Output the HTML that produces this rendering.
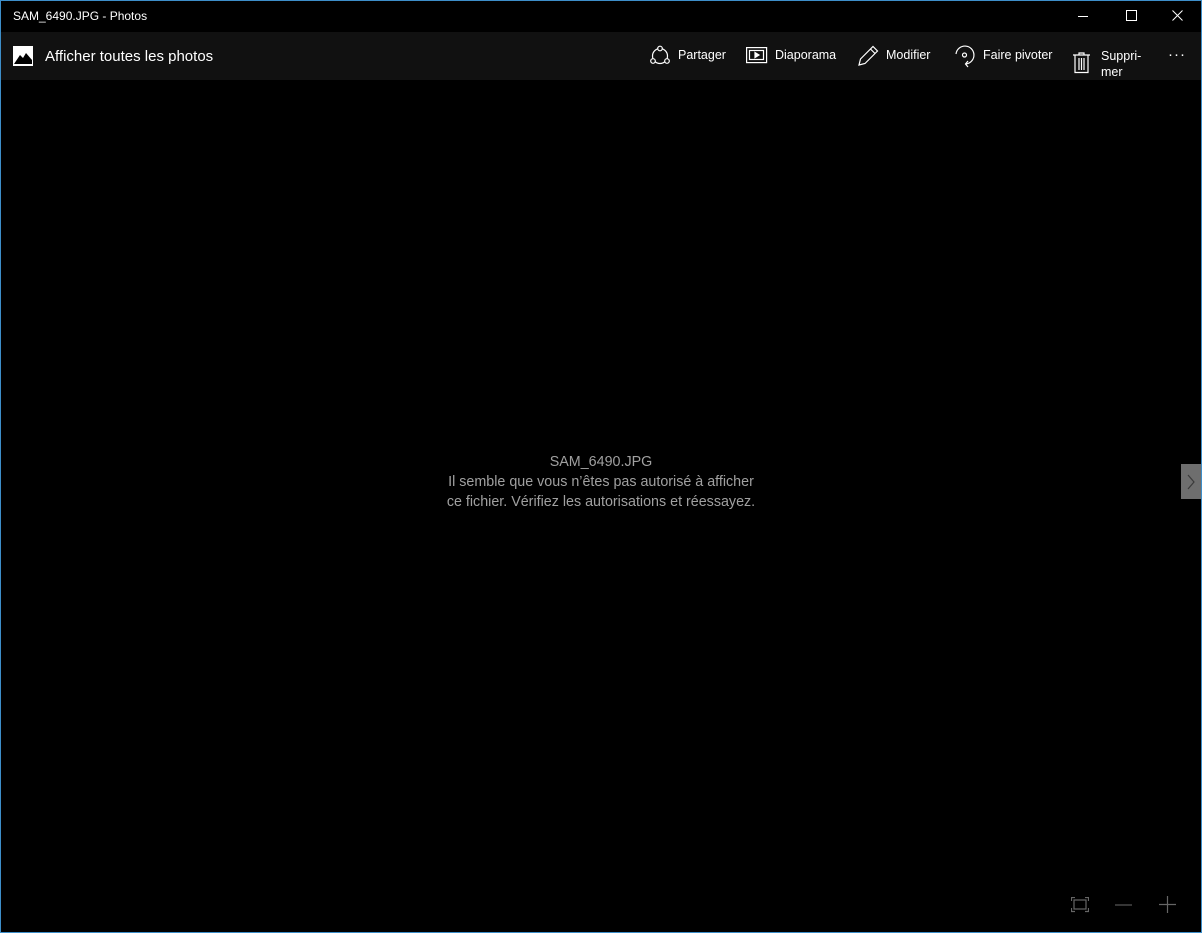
<!DOCTYPE html>
<html><head><meta charset="utf-8"><style>
*{margin:0;padding:0;box-sizing:border-box}
body{width:1202px;height:933px;background:#000;font-family:"Segoe UI","Liberation Sans",sans-serif;color:#fff;position:relative;overflow:hidden}
.frame{position:absolute;inset:0;border:1px solid #3d8ec9;pointer-events:none;z-index:10}
.title{position:absolute;left:0;top:0;width:1202px;height:32px;background:#000}
.title .t{position:absolute;left:13px;top:9px;font-size:12px}
.tb{position:absolute;left:0;top:32px;width:1202px;height:48px;background:#111}
.lbl{position:absolute;font-size:12.5px;color:#fff}
svg{position:absolute}
.msg{position:absolute;left:0;width:1202px;text-align:center;font-size:14.3px;color:#a0a0a0;line-height:20px}
</style></head><body>
<div class="frame"></div>
<div class="title"><span class="t">SAM_6490.JPG - Photos</span>
<svg style="left:1078px;top:10px" width="12" height="12"><line x1="0" y1="6.5" x2="10" y2="6.5" stroke="#fff"/></svg>
<svg style="left:1126px;top:10px" width="12" height="12"><rect x="0.5" y="0.5" width="10" height="10" fill="none" stroke="#fff"/></svg>
<svg style="left:1172px;top:10px" width="12" height="12"><path d="M0.5 0.5L10.5 10.5M10.5 0.5L0.5 10.5" stroke="#fff"/></svg>
</div>
<div class="tb">
<svg style="left:13px;top:14px" width="20" height="20"><rect x="0" y="0" width="20" height="20" fill="#fff"/><path d="M1 18 L7 9 L10 12 L13 7 L19 14 L19 18Z" fill="#000"/><rect x="1" y="1" width="18" height="4" fill="#fff"/></svg>
<span class="lbl" style="left:45px;top:16px;font-size:15px">Afficher toutes les photos</span>
<svg style="left:649px;top:13px" width="22" height="22" fill="none" stroke="#fff" stroke-width="1.2"><circle cx="11" cy="11" r="7.5"/><circle cx="11" cy="3.5" r="2.3" fill="#111"/><circle cx="4" cy="16" r="2.3" fill="#111"/><circle cx="18" cy="16" r="2.3" fill="#111"/></svg>
<span class="lbl" style="left:678px;top:16px">Partager</span>
<svg style="left:746px;top:15px" width="22" height="18" fill="none" stroke="#fff" stroke-width="1.2"><rect x="0.6" y="0.6" width="20" height="15"/><rect x="3.5" y="3.5" width="14" height="9"/><path d="M9 5.5L13 8L9 10.5Z" fill="#fff"/></svg>
<span class="lbl" style="left:775px;top:16px">Diaporama</span>
<svg style="left:857px;top:13px" width="22" height="22" fill="none" stroke="#fff" stroke-width="1.2"><path d="M2 20L3.5 14L16 1.5L20.5 6L8 18.5Z M13.5 4L18 8.5"/></svg>
<span class="lbl" style="left:886px;top:16px">Modifier</span>
<svg style="left:954px;top:13px" width="22" height="24" fill="none" stroke="#fff" stroke-width="1.2"><path d="M2 9A9 9 0 1 1 12 19"/><path d="M14 16L11.5 19L14 22"/><circle cx="10.5" cy="10" r="2"/></svg>
<span class="lbl" style="left:983px;top:16px">Faire pivoter</span>
<svg style="left:1073px;top:20px" width="18" height="22" fill="none" stroke="#fff" stroke-width="1.2"><path d="M0 3H17M6 3V1H11V3M2 3V20.5H15V3M6 6V18M8.5 6V18M11 6V18"/></svg>
<span class="lbl" style="left:1101px;top:16px;line-height:16px">Suppri-<br>mer</span>
<span class="lbl" style="left:1168px;top:14px;font-size:15px;letter-spacing:1px">···</span>
</div>
<div class="msg" style="top:452px">SAM_6490.JPG</div>
<div class="msg" style="top:472px">Il semble que vous n’êtes pas autorisé à afficher</div>
<div class="msg" style="top:492px">ce fichier. Vérifiez les autorisations et réessayez.</div>
<div style="position:absolute;left:1181px;top:464px;width:20px;height:35px;background:#6e6e6e"></div>
<svg style="left:1186px;top:474px" width="10" height="16"><path d="M2 1L8 8L2 15" fill="none" stroke="#3a3a3a" stroke-width="1.2"/></svg>
<svg style="left:1071px;top:897px" width="18" height="16" fill="none" stroke="#666" stroke-width="1.2"><rect x="3" y="3" width="12" height="9"/><path d="M0.5 4V0.5H4M14 0.5H17.5V4M17.5 11V14.5H14M4 14.5H0.5V11"/></svg>
<svg style="left:1115px;top:898px" width="18" height="14"><line x1="0" y1="7" x2="17" y2="7" stroke="#555" stroke-width="1.2"/></svg>
<svg style="left:1159px;top:896px" width="18" height="18"><path d="M0 8.5H17M8.5 0V17" stroke="#666" stroke-width="1.2"/></svg>
</body></html>
